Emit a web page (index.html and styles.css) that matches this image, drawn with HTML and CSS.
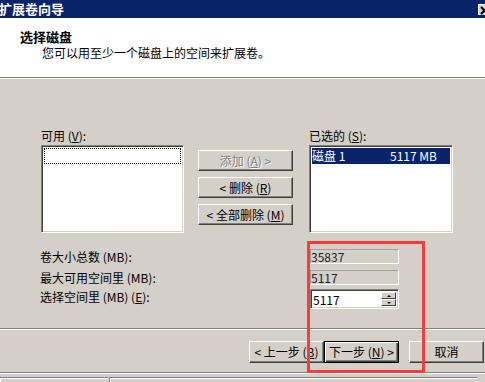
FILE: index.html
```html
<!DOCTYPE html>
<html lang="zh-CN">
<head>
  <meta charset="UTF-8">
  <title>扩展卷向导</title>
  <link rel="stylesheet" href="styles.css">
</head>
<body>
  <div class="wizard">
    <div class="titlebar">
      <span class="title">扩展卷向导</span>
      <span class="close">
        <svg width="10" height="9" viewBox="0 0 10 9"><path d="M1 1 L8 8 M8 1 L1 8" stroke="#000" stroke-width="2"/></svg>
      </span>
    </div>

    <div class="header">
      <div class="heading">选择磁盘</div>
      <div class="subheading">您可以用至少一个磁盘上的空间来扩展卷。</div>
    </div>

    <div class="content">
      <div class="picker">
        <div class="caption cap-left">可用 (<u>V</u>):</div>
        <div class="caption cap-right">已选的 (<u>S</u>):</div>

        <div class="listbox list-left">
          <div class="row focus"></div>
        </div>

        <div class="movers">
          <button class="btn" disabled>添加 (<u>A</u>) &gt;</button>
          <button class="btn">&lt; 删除 (<u>R</u>)</button>
          <button class="btn">&lt; 全部删除 (<u>M</u>)</button>
        </div>

        <div class="listbox list-right">
          <div class="row selected"><span>磁盘 1</span><span>5117 MB</span></div>
        </div>
      </div>

      <div class="sizes">
        <span class="label">卷大小总数 (MB):</span>
        <div class="field readonly">35837</div>

        <span class="label">最大可用空间里 (MB):</span>
        <div class="field readonly">5117</div>

        <span class="label">选择空间里 (MB) (<u>E</u>):</span>
        <div class="spin">
          <div class="spin-value">5117</div>
          <div class="spin-arrows">
            <span class="arrow up"></span>
            <span class="arrow down"></span>
          </div>
        </div>
      </div>
    </div>

    <div class="footer">
      <button class="btn wide">&lt; 上一步 (<u>B</u>)</button>
      <button class="btn wide default">下一步 (<u>N</u>) &gt;</button>
      <button class="btn wide cancel">取消</button>
    </div>

    <div class="statusbar">
      <span class="pane first"></span>
      <span class="pane"></span>
    </div>

    <!-- red marker drawn over the screenshot -->
    <div class="highlight"></div>
  </div>
</body>
</html>
```

FILE: styles.css
```css
/* classic windows dialog look */
body {
  margin: 0;
  background-color: #d4d0c8;
  font-family: "Noto Sans CJK SC", "DejaVu Sans", sans-serif;
  font-size: 12px;
  color: #000;
}

.wizard {
  position: relative;
  width: 485px;
  height: 382px;
  overflow: hidden;
}

u {
  text-decoration: underline;
}

/* title bar */
.titlebar {
  display: flex;
  align-items: flex-start;
  height: 18px;
  background-color: #0a246a;
  color: #fff;
  overflow: hidden;
}

.title {
  font-size: 13px;
  font-weight: bold;
  line-height: 18px;
  margin-left: -1px;
}

.close {
  display: flex;
  align-items: center;
  margin-left: auto;
  margin-right: -9px;
  margin-top: 4px;
  width: 16px;
  height: 11px;
  background-color: #d4d0c8;
  padding-left: 1px;
  box-sizing: border-box;
  border-top: 1px solid #fff;
  border-left: 1px solid #fff;
}

/* white header */
.header {
  height: 48px;
  background-color: #fff;
  border-bottom: 1px solid #808080;
  box-shadow: 0 1px 0 #fff;
  padding: 11px 0 0 20px;
  margin-bottom: 1px;
}

.heading {
  font-size: 13px;
  font-weight: bold;
  line-height: 16px;
}

.subheading {
  margin-left: 22px;
  line-height: 15px;
}

/* main body */
.content {
  height: 200px;
  padding-top: 49px;
}

.picker {
  display: grid;
  grid-template-columns: 143px 14px 95px 16px 144px;
  grid-template-rows: 16px 88px;
  row-gap: 1px;
  padding-left: 41px;
}

.caption {
  line-height: 16px;
}

.cap-left {
  grid-column: 1;
  grid-row: 1;
}

.cap-right {
  grid-column: 5;
  grid-row: 1;
}

.listbox {
  grid-row: 2;
  background-color: #fff;
  border: 1px solid;
  border-color: #808080 #fff #fff #808080;
  box-shadow: inset 1px 1px 0 #404040, inset -1px -1px 0 #d4d0c8;
  padding: 2px 2px;
  box-sizing: border-box;
}

.list-left {
  grid-column: 1;
}

.list-right {
  grid-column: 5;
}

.row {
  height: 16px;
  box-sizing: border-box;
  line-height: 15px;
}

.row.focus {
  border: 1px dotted #000;
}

.row.selected {
  display: grid;
  grid-template-columns: 78px auto;
  background-color: #0a246a;
  color: #fff;
}

.movers {
  grid-column: 3;
  grid-row: 2;
  display: flex;
  flex-direction: column;
  gap: 6px;
  padding-top: 5px;
}

.btn {
  height: 21px;
  padding: 0;
  font-family: inherit;
  font-size: 12px;
  line-height: 18px;
  color: #000;
  background-color: #d4d0c8;
  border: 1px solid;
  border-color: #fff #404040 #404040 #fff;
  box-shadow: inset -1px -1px 0 #808080;
  box-sizing: border-box;
}

.btn:disabled {
  color: #808080;
  text-shadow: 1px 1px 0 #fff;
}

/* size fields */
.sizes {
  display: grid;
  grid-template-columns: 270px 89px;
  grid-template-rows: 21px 19px 20px;
  padding-left: 40px;
  margin-top: 16px;
}

.label {
  line-height: 14px;
  padding-top: 1px;
}

.field {
  height: 15px;
  line-height: 14px;
  box-sizing: border-box;
  white-space: nowrap;
}

.readonly {
  border-top: 1px solid #a0a0a0;
  border-left: 1px solid #a0a0a0;
  border-bottom: 1px solid #fff;
  border-right: 1px solid #fff;
  color: #202020;
}

.spin {
  display: flex;
  height: 20px;
  background-color: #fff;
  border: 1px solid;
  border-color: #808080 #fff #fff #808080;
  box-shadow: inset 1px 1px 0 #404040, inset -1px -1px 0 #d4d0c8;
  box-sizing: border-box;
  padding: 2px;
}

.spin-value {
  flex: 1;
  line-height: 16px;
}

.spin-arrows {
  display: flex;
  flex-direction: column;
  width: 15px;
}

.arrow {
  display: flex;
  align-items: center;
  justify-content: center;
  height: 8px;
  background-color: #d4d0c8;
  border: 1px solid;
  border-color: #fff #404040 #404040 #fff;
  box-sizing: border-box;
}

.arrow::after {
  content: "";
  border-left: 2px solid transparent;
  border-right: 2px solid transparent;
}

.arrow.up::after {
  border-bottom: 2px solid #000;
}

.arrow.down::after {
  border-top: 2px solid #000;
}

/* bottom buttons */
.footer {
  display: flex;
  justify-content: flex-end;
  height: 31px;
  border-top: 1px solid #808080;
  box-shadow: inset 0 1px 0 #fff;
  padding: 12px 1px 0 0;
}

.btn.wide {
  width: 75px;
  height: 22px;
}

.btn.default {
  border: 1px solid #000;
  box-shadow: inset 1px 1px 0 #fff, inset -1px -1px 0 #404040, inset -2px -2px 0 #808080;
}

.btn.cancel {
  margin-left: 10px;
}

.statusbar {
  display: flex;
  height: 9px;
  border-top: 1px solid #808080;
  box-shadow: inset 0 1px 0 #fff;
  padding-top: 4px;
}

.pane {
  flex: 1;
  border-top: 1px solid #808080;
  border-left: 1px solid #808080;
  box-shadow: inset 1px 1px 0 #fff;
  margin-right: 8px;
}

.pane.first {
  flex: none;
  width: 108px;
  border-left: none;
  margin-right: 1px;
}

.highlight {
  position: absolute;
  left: 307px;
  top: 241px;
  width: 118px;
  height: 132px;
  border: 3px solid #ff3a3a;
  box-sizing: border-box;
}
```
